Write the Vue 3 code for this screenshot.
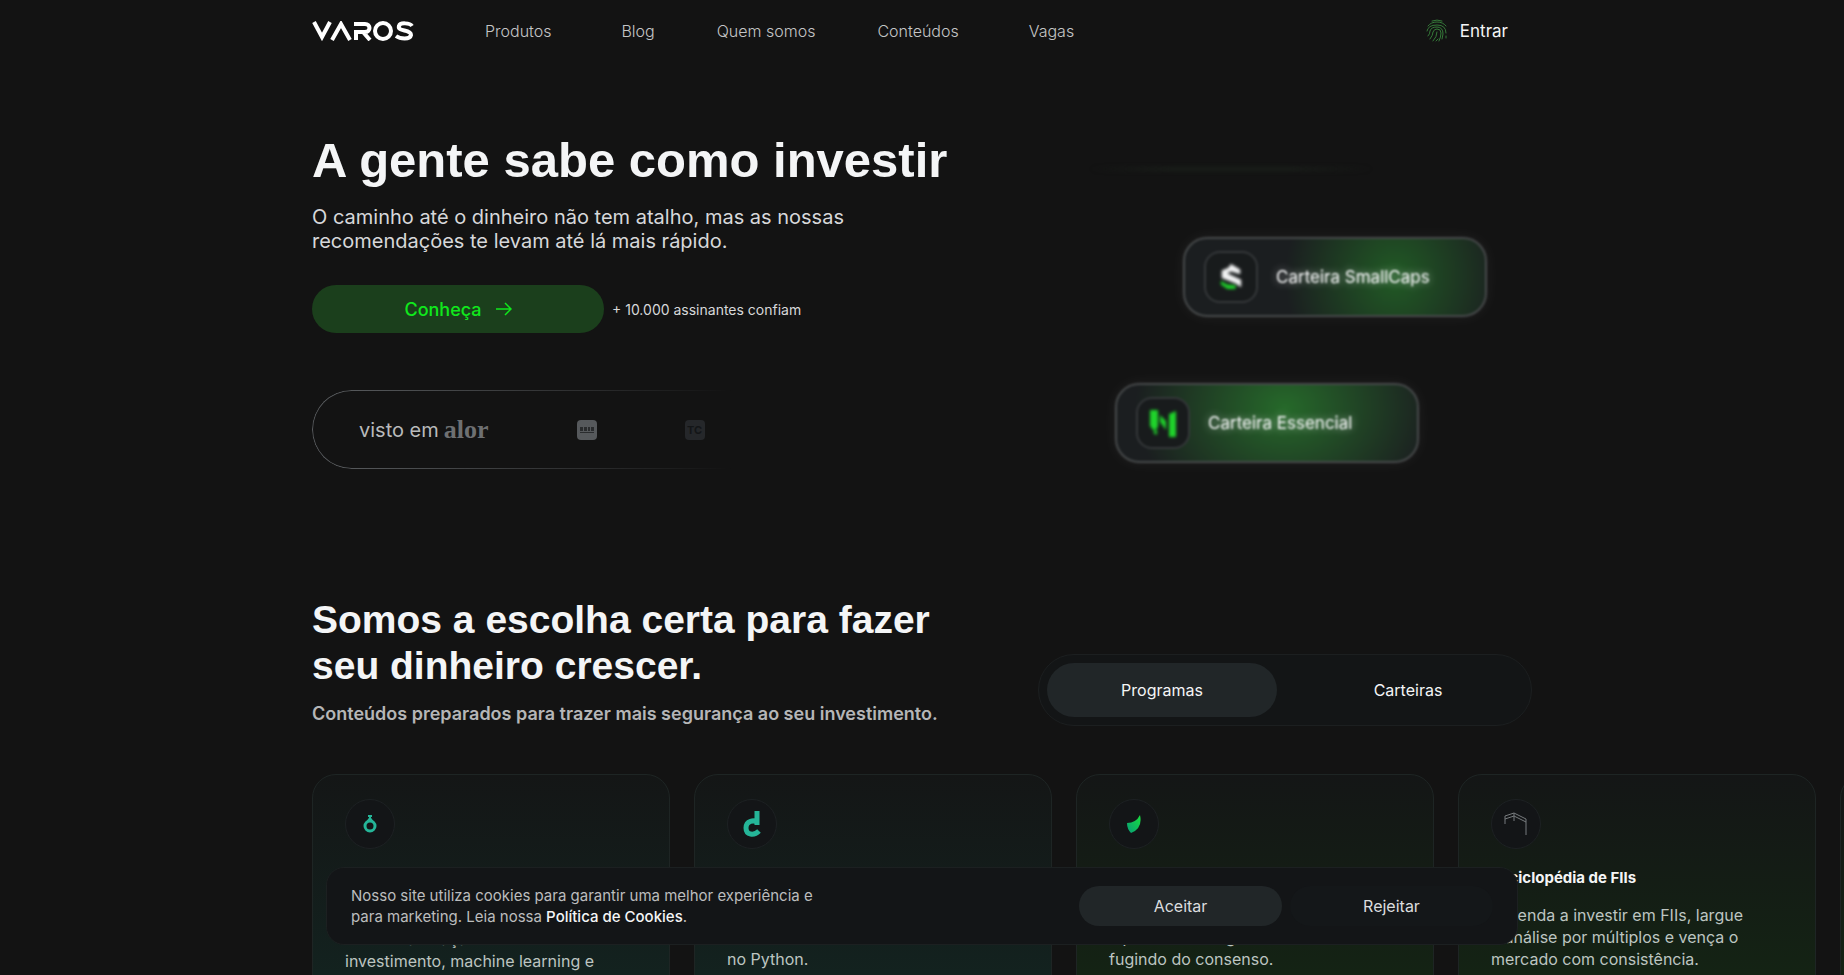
<template>
    <div class="page">
        <header class="topbar">
            <a href="#" class="logo" aria-label="VAROS">
                <svg width="102" height="20" viewBox="0 0 102 20" fill="none" stroke="#fff" stroke-width="4">
                    <path d="M2 1 10 16 18 1" />
                    <path d="M20 19 29 3 38 19" />
                    <path d="M42 3H53C59 3 59 11 53 11H44V19M51 11 58 19" />
                    <circle cx="71" cy="10" r="8" />
                    <path d="M100 5C98 2 88 1 87 5C85 11 99 8 99 14C98 19 88 18 84 15" />
                </svg>
            </a>
            <nav class="menu">
                <a v-for="item in menu" :key="item.label" href="#" :class="{ 'has-sub': item.sub }">{{ item.label }}</a>
            </nav>
            <a href="#" class="login">
                <svg width="22" height="24" viewBox="0 0 22 24" fill="none" stroke="#357a39" stroke-linecap="round">
                    <path d="M6 2Q11 0 16 2M2 7Q5 3 11 3Q17 3 20 7M1 12Q2 6 11 6Q20 6 20 14M2 17Q4 15 4 12Q5 8 11 8Q17 8 17 15L16 20" />
                    <path d="M4 20Q7 16 7 13Q8 10 11 10Q15 10 15 14Q15 18 13 22M7 22Q11 18 11 13M10 22L12 20M20 17V19" />
                </svg>
                <span>Entrar</span>
            </a>
        </header>

        <main>
            <section class="hero">
                <div class="hero-text">
                    <h1>A gente sabe como investir</h1>
                    <p class="lead">O caminho até o dinheiro não tem atalho, mas as nossas recomendações te levam até lá mais rápido.</p>
                    <div class="cta">
                        <button type="button" class="cta-btn">
                            Conheça
                            <svg width="16" height="14" viewBox="0 0 16 14" fill="none" stroke="currentColor" stroke-width="1.5">
                                <path d="M0 7H15M9 1 15 7 9 13" />
                            </svg>
                        </button>
                        <span class="cta-note">+ 10.000 assinantes confiam</span>
                    </div>
                    <div class="seen">
                        <span class="seen-label">visto em</span>
                        <span class="seen-valor">alor</span>
                        <span class="seen-box">
                            <svg width="14" height="6" viewBox="0 0 14 6" fill="#2a2c2e">
                                <path d="M0 0H3V4H0ZM4 0H7V4H4ZM8 0H10V4H8ZM11 0H14V4H11ZM0 5H14V6H0Z" />
                            </svg>
                        </span>
                        <span class="seen-box seen-tc">TC</span>
                    </div>
                </div>
                <div class="wallets">
                    <div class="wallet-trail"></div>
                    <div class="wallet wallet-small">
                        <span class="wallet-icon">
                            <svg width="24" height="28" viewBox="0 0 26 28">
                                <path d="M13 0 23 6V11L13 8 9 10 24 17V25L18 21 3 15V7L10 4Z" fill="#f4f5f6" />
                                <path d="M2 18 9 22 18 23 18 27H9L2 22Z" fill="#1fd42b" />
                            </svg>
                        </span>
                        <span>Carteira SmallCaps</span>
                    </div>
                    <div class="wallet wallet-essential">
                        <span class="wallet-icon">
                            <svg width="28" height="30" viewBox="0 0 28 30" fill="#1fd42b">
                                <path d="M1 2H9V19L5 23 1 18ZM20 6 27 3V29H20ZM11 7 17 13V22L11 14ZM4 25 8 21V27Z" />
                            </svg>
                        </span>
                        <span>Carteira Essencial</span>
                    </div>
                </div>
            </section>

            <section class="products">
                <div class="products-head">
                    <div class="products-title">
                        <h2>Somos a escolha certa para fazer seu dinheiro crescer.</h2>
                        <p>Conteúdos preparados para trazer mais segurança ao seu investimento.</p>
                    </div>
                    <div class="tabs">
                        <button
                            v-for="tab in tabs"
                            :key="tab"
                            type="button"
                            :class="{ active: tab === activeTab }"
                            @click="activeTab = tab"
                        >{{ tab }}</button>
                    </div>
                </div>

                <div class="cards">
                    <article v-for="card in cards" :key="card.id" class="card" :class="card.tone">
                        <div class="card-icon">
                            <svg v-if="card.id === 'quant'" width="14" height="18" viewBox="0 0 14 18" fill="none" stroke="#25b598">
                                <circle cx="7" cy="11" r="5" stroke-width="3" />
                                <path d="M5 1H9M7 1V3L4 7M7 3L10 7" stroke-width="2" />
                            </svg>
                            <svg v-else-if="card.id === 'python'" width="18" height="26" viewBox="0 0 18 26" fill="none" stroke="#25b598" stroke-width="5">
                                <path d="M14 0V14M15 12C11 8 3 10 3 17C3 24 11 25 16 20" />
                            </svg>
                            <svg v-else-if="card.id === 'stocks'" width="14" height="18" viewBox="0 0 14 18">
                                <defs>
                                    <linearGradient id="leaf" x1="1" y1="0" x2="0" y2="1">
                                        <stop offset="0" stop-color="#19e03c" />
                                        <stop offset="1" stop-color="#079d77" />
                                    </linearGradient>
                                </defs>
                                <path d="M0 8Q9 8 13 0Q16 13 4 18Q0 14 0 8Z" fill="url(#leaf)" />
                            </svg>
                            <svg v-else-if="card.id === 'fiis'" width="24" height="24" viewBox="0 0 24 24" fill="none" stroke="#777b7e">
                                <path d="M1 12V4L10 1 22 7V23M1 7 10 4 22 10M10 1V9" />
                            </svg>
                        </div>
                        <h3>{{ card.title }}</h3>
                        <p>{{ card.text }}</p>
                    </article>
                </div>
            </section>
        </main>

        <div v-if="showCookies" class="cookies" role="dialog" aria-label="Cookies">
            <p>Nosso site utiliza cookies para garantir uma melhor experiência e para marketing. Leia nossa <a href="#">Política de Cookies</a>.</p>
            <div class="cookies-actions">
                <button type="button" class="accept" @click="showCookies = false">Aceitar</button>
                <button type="button" @click="showCookies = false">Rejeitar</button>
            </div>
        </div>
    </div>
</template>

<script setup>
import { ref } from "vue"

const menu = [
    { label: "Produtos", sub: true },
    { label: "Blog" },
    { label: "Quem somos" },
    { label: "Conteúdos", sub: true },
    { label: "Vagas" }
]
const tabs = ["Programas", "Carteiras"]
const activeTab = ref("Programas")
const showCookies = ref(true)

const cards = [
    {
        id: "quant",
        tone: "teal",
        title: "Código Quant: finanças quantitativas na prática",
        text: "Domine a criação de modelos de\ninvestimento, machine learning e\nanálise de dados."
    },
    {
        id: "python",
        tone: "teal",
        title: "Código Python",
        text: "Automatize tarefas e analise\ndados do mercado financeiro\nno Python."
    },
    {
        id: "stocks",
        tone: "green",
        title: "Código Ações",
        text: "Aprenda a analisar empresas e\na pensar como gestor\nfugindo do consenso."
    },
    {
        id: "fiis",
        tone: "green",
        title: "Enciclopédia de FIIs",
        text: "Aprenda a investir em FIIs, largue\na análise por múltiplos e vença o\nmercado com consistência."
    },
    { id: "more", tone: "green", title: "", text: "" }
]
</script>

<style>
body {
    margin: 0;
    background: #131313;
}
</style>

<style scoped>
.page {
    height: 100vh;
    overflow: hidden;
    background: #131313;
    color: #f4f5f6;
    font-family: Inter, "Liberation Sans", sans-serif;
}

.page *,
.page *::before,
.page *::after {
    box-sizing: border-box;
}

a {
    color: inherit;
    text-decoration: none;
}

button {
    border: none;
    background: none;
    font-family: inherit;
    color: inherit;
    cursor: pointer;
}

h1, h2, h3, p {
    margin: 0;
}

.topbar,
.hero,
.products {
    width: calc(100% - 48px);
    max-width: 1220px;
    margin: 0 auto;
}

.topbar {
    display: flex;
    align-items: center;
    height: 62px;
    padding-right: 24px;
}

.logo {
    display: flex;
}

.menu {
    display: flex;
    flex: 1;
    gap: 62px;
    margin-left: 71px;
    font-size: 16px;
    font-weight: 300;
    color: #c4c5c6;
}

.has-sub {
    padding-right: 8px;
}

.login {
    display: flex;
    align-items: center;
    gap: 12px;
    font-size: 17px;
}

.hero {
    display: flex;
    justify-content: space-between;
    padding-top: 70px;
}

.hero-text {
    width: 660px;
}

h1 {
    font-family: "Liberation Sans", sans-serif;
    font-size: 49px;
    line-height: 56px;
}

.lead {
    max-width: 560px;
    margin-top: 17px;
    font-size: 20px;
    line-height: 24px;
    color: #d7d8da;
}

.cta {
    display: flex;
    align-items: center;
    gap: 8px;
    margin-top: 32px;
}

.cta-btn {
    display: flex;
    align-items: center;
    justify-content: center;
    gap: 14px;
    width: 292px;
    height: 48px;
    border-radius: 24px;
    background: #1b3f1c;
    color: #10e81c;
    font-size: 18px;
    font-weight: 500;
}

.cta-note {
    font-size: 14px;
    color: #d7d8da;
}

.seen {
    position: relative;
    display: flex;
    align-items: center;
    width: 420px;
    height: 79px;
    margin-top: 57px;
    padding-left: 47px;
}

.seen::before {
    content: "";
    position: absolute;
    inset: 0;
    border: 1px solid #5c5f62;
    border-right: none;
    border-radius: 40px 0 0 40px;
    mask-image: linear-gradient(90deg, #000, transparent);
}

.seen-label {
    font-size: 20px;
    color: #b9babb;
}

.seen-valor {
    margin-left: 5px;
    font-family: "Liberation Serif", serif;
    font-size: 26px;
    font-weight: bold;
    color: #6e7072;
}

.seen-box {
    display: flex;
    align-items: center;
    justify-content: center;
    width: 20px;
    height: 20px;
    margin-left: 88px;
    border-radius: 4px;
    background: #56595c;
}

.seen-tc {
    background: #25272a;
    color: #131517;
    font-size: 11px;
    font-weight: bold;
}

.wallets {
    display: flex;
    flex-direction: column;
    gap: 66px;
    width: 417px;
    padding-top: 35px;
}

.wallet-trail {
    width: 280px;
    height: 4px;
    margin-left: -24px;
    background: linear-gradient(90deg, transparent, #1a1f1a 30%, #1a1f1a 70%, transparent);
    filter: blur(2px);
}

.wallet {
    display: flex;
    align-items: center;
    gap: 18px;
    width: 304px;
    height: 80px;
    padding-left: 19px;
    border: 2px solid #46494a;
    border-radius: 24px;
    font-size: 17px;
    text-shadow: 0 0 8px rgba(255, 255, 255, 0.6);
    box-shadow: 0 0 16px rgba(255, 255, 255, 0.06);
    filter: blur(1px);
}

.wallet-small {
    margin-left: 68px;
    background: radial-gradient(ellipse 110px 120px at 70% 50%, #215a25, transparent), #1b1e20;
}

.wallet-essential {
    background: radial-gradient(ellipse 150px 120px at 56% 30%, #26692a, transparent), #1b1e20;
}

.wallet-icon {
    display: flex;
    align-items: center;
    justify-content: center;
    width: 54px;
    height: 52px;
    border: 2px solid #343739;
    border-radius: 16px;
    background: #181b1c;
}

.wallet-icon svg {
    filter: blur(1px);
}

.products {
    padding-top: 128px;
}

.products-head {
    display: flex;
    justify-content: space-between;
    align-items: flex-end;
}

.products-title {
    width: 650px;
}

h2 {
    font-family: "Liberation Sans", sans-serif;
    font-size: 39px;
    line-height: 46px;
}

.products-title p {
    margin-top: 13px;
    font-size: 18px;
    font-weight: 600;
    line-height: 24px;
    color: #b5b6b7;
}

.tabs {
    display: flex;
    gap: 16px;
    width: 494px;
    padding: 8px;
    border: 1px solid #1c1f20;
    border-radius: 40px;
    background: #131516;
}

.tabs button {
    flex: 1;
    height: 54px;
    border-radius: 27px;
    font-size: 16px;
}

.tabs .active {
    background: #212628;
}

.cards {
    display: flex;
    gap: 24px;
    margin-top: 48px;
}

.card {
    flex: none;
    width: 358px;
    min-height: 400px;
    padding: 24px 32px;
    border: 1px solid #1e2524;
    border-radius: 24px;
}

.teal {
    background: linear-gradient(#141616, #13221f 50%, #122c27);
}

.green {
    background: linear-gradient(#141616, #142314 50%, #142e12);
}

.card-icon {
    display: flex;
    align-items: center;
    justify-content: center;
    width: 50px;
    height: 50px;
    border: 1px solid #1d2123;
    border-radius: 50%;
    background: #131517;
}

.card h3 {
    margin-top: 17px;
    font-size: 15px;
    line-height: 24px;
}

.card p {
    margin-top: 14px;
    font-size: 16px;
    line-height: 22px;
    white-space: pre-line;
    color: #bdc5c1;
}

.cookies {
    position: fixed;
    right: 0;
    bottom: 30px;
    left: 0;
    display: flex;
    align-items: center;
    justify-content: space-between;
    width: calc(100% - 48px);
    max-width: 1192px;
    margin: 0 auto;
    padding: 17px 24px;
    border: 1px solid #1c2021;
    border-radius: 18px;
    background: #131517;
}

.cookies p {
    width: 490px;
    font-size: 15px;
    line-height: 21px;
    color: #bcbdbe;
}

.cookies p a {
    font-weight: 500;
    color: #f4f5f6;
}

.cookies-actions {
    display: flex;
    gap: 8px;
}

.cookies-actions button {
    width: 203px;
    height: 40px;
    border-radius: 20px;
    background: #141719;
    font-size: 16px;
    color: #dcdddf;
}

.cookies-actions .accept {
    background: #212628;
}
</style>
